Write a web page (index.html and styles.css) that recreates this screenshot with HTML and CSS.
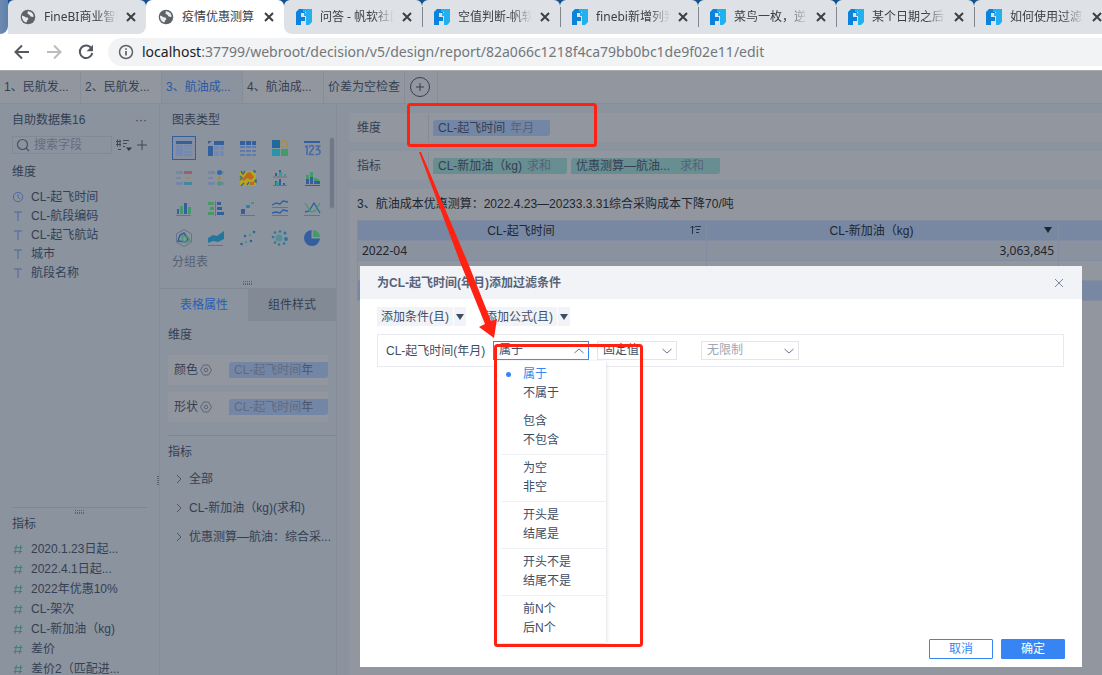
FILE: index.html
```html
<!DOCTYPE html>
<html lang="zh-CN">
<head>
<meta charset="utf-8">
<title>疫情优惠测算</title>
<link rel="stylesheet" href="styles.css">
</head>
<body>
<svg class="defs" aria-hidden="true">
  <symbol id="globe" viewBox="0 0 16 16"><circle cx="8" cy="8" r="7.3" fill="#5f6368"/><path d="M2 6.5C4 7 5 8.200 7 8.500c1.500.3 1.600 1.500.8 2.300-.8.7-.6 2-1.600 2.700C3.500 12.800 1.700 10 2 6.500zM7 2.200c1 .1 1.300.8.6 1.500C6.800 4.500 8 5.200 9 5.600c1 .5.8 1.800 1.900 2 1.100.1 1.700.6 2.700.2C13.700 4.500 11 2 7 2.200z" fill="#e9ebee"/></symbol>
  <symbol id="fan" viewBox="0 0 16 16"><path d="M3 0h6v4H5v4h4v4H5v4H0V3z" fill="#0b83dc"/><path d="M7 0h9v13l-3 3h-3V7H8V4h2V3H7z" fill="#22b1ee"/></symbol>
  <symbol id="x" viewBox="0 0 10 10"><path d="M1 1l8 8M9 1L1 9" stroke="currentColor" fill="none"/></symbol>
  <symbol id="type-t" viewBox="0 0 12 12"><path d="M2 2h8M6 2v9" stroke="#4a68a0" fill="none"/></symbol>
  <symbol id="hash" viewBox="0 0 12 12"><path d="M4.500 2L3 11M9 2L7.500 11M2 4.500h8.500M1.500 8.500H10" stroke="#36837f" fill="none"/></symbol>
  <symbol id="gear" viewBox="0 0 12 12"><path d="M3.500 1h5L11.500 6l-3 5h-5L.5 6z" stroke="#5b6577" fill="none"/><circle cx="6" cy="6" r="1.800" stroke="#5b6577" fill="none"/></symbol>
  <symbol id="right" viewBox="0 0 10 12"><path d="M3 2l4 4-4 4" stroke="#4b566a" fill="none"/></symbol>
  <symbol id="down" viewBox="0 0 12 8"><path d="M1.500 2L6 6l4.500-4" stroke="#6c7588" fill="none"/></symbol>
  <symbol id="up" viewBox="0 0 12 8"><path d="M1.500 6L6 2l4.500 4" stroke="#6c7588" fill="none"/></symbol>
  <symbol id="tri" viewBox="0 0 8 6"><path d="M0 0h8L4 6z" fill="currentColor"/></symbol>
</svg>

<header class="browser">
  <nav class="tabstrip" aria-label="标签页">
    <span class="edge"></span>
    <div class="tab first"><svg><use href="#globe"/></svg><span class="name">FineBI商业智能</span><button aria-label="关闭"><svg><use href="#x"/></svg></button></div>
    <div class="tab current"><svg><use href="#globe"/></svg><span class="name">疫情优惠测算</span><button aria-label="关闭"><svg><use href="#x"/></svg></button></div>
    <div class="tab after"><svg><use href="#fan"/></svg><span class="name">问答 - 帆软社区</span><button aria-label="关闭"><svg><use href="#x"/></svg></button></div>
    <div class="tab split"><svg><use href="#fan"/></svg><span class="name">空值判断-帆软</span><button aria-label="关闭"><svg><use href="#x"/></svg></button></div>
    <div class="tab split"><svg><use href="#fan"/></svg><span class="name">finebi新增列判</span><button aria-label="关闭"><svg><use href="#x"/></svg></button></div>
    <div class="tab split"><svg><use href="#fan"/></svg><span class="name">菜鸟一枚，逆</span><button aria-label="关闭"><svg><use href="#x"/></svg></button></div>
    <div class="tab split"><svg><use href="#fan"/></svg><span class="name">某个日期之后</span><button aria-label="关闭"><svg><use href="#x"/></svg></button></div>
    <div class="tab split"><svg><use href="#fan"/></svg><span class="name">如何使用过滤</span><button aria-label="关闭"><svg><use href="#x"/></svg></button></div>
  </nav>
  <div class="toolbar">
    <button aria-label="后退"><svg viewBox="0 0 16 16"><path d="M15 8H2M8 1.500L1.500 8 8 14.500" stroke="#55595e" stroke-width="2" fill="none"/></svg></button>
    <button aria-label="前进"><svg viewBox="0 0 16 16"><path d="M1 8h13M8 1.500L14.500 8 8 14.500" stroke="#babcbe" stroke-width="2" fill="none"/></svg></button>
    <button aria-label="刷新"><svg viewBox="0 0 16 16"><path d="M13.500 4.500A6.300 6.300 0 1 0 14.300 9" stroke="#55595e" stroke-width="2" fill="none"/><path d="M15 .8v6.400H8.600z" fill="#55595e"/></svg></button>
    <div class="address">
      <svg viewBox="0 0 16 16"><circle cx="8" cy="8" r="6.500" stroke="#5f6368" stroke-width="1.500" fill="none"/><path d="M8 7v4.500M8 4.200v1.600" stroke="#5f6368" stroke-width="1.700"/></svg>
      <span class="url"><b>localhost</b>:37799/webroot/decision/v5/design/report/82a066c1218f4ca79bb0bc1de9f02e11/edit</span>
    </div>
  </div>
</header>

<div class="app">
  <nav class="sheets" aria-label="组件">
    <button>1、民航发...</button><button>2、民航发...</button><button class="on">3、航油成...</button><button>4、航油成...</button><button>价差为空检查</button>
    <button class="add" aria-label="添加组件"><svg viewBox="0 0 22 22"><circle cx="11" cy="11" r="9.500" stroke="#333e52" fill="none"/><path d="M7 11h8M11 7v8" stroke="#333e52"/></svg></button>
  </nav>
  <div class="workspace">
    <aside class="fields">
      <section class="dims">
        <div class="head"><span>自助数据集16</span><span class="dots">···</span></div>
        <div class="searchrow">
          <label class="search"><svg viewBox="0 0 14 14"><circle cx="6.500" cy="6.500" r="5" stroke="#465166" stroke-width="1.200" fill="none"/><path d="M10 10l3 3" stroke="#465166" stroke-width="1.300"/></svg><input type="text" placeholder="搜索字段" aria-label="搜索字段"></label>
          <button class="sort" aria-label="排序"><svg viewBox="0 0 16 14"><path d="M0 3.500h5M0 6.500h5M1.500 1.500v7M4 1.500v7M7 2.500h6M7 5.500h4M7 8.500h2M2 11.500h3" stroke="#3d485c" fill="none"/><path d="M10 9.500h6l-3 3.500z" fill="#2f394d"/></svg></button>
          <button class="plus" aria-label="添加"><svg viewBox="0 0 12 12"><path d="M1 6h10M6 1v10" stroke="#3d485c"/></svg></button>
        </div>
        <h2>维度</h2>
        <ul>
          <li><svg viewBox="0 0 12 12"><circle cx="6" cy="6" r="4.700" stroke="#4a68a0" fill="none"/><path d="M6 3v3l2 2" stroke="#4a68a0" fill="none"/></svg>CL-起飞时间</li>
          <li><svg><use href="#type-t"/></svg>CL-航段编码</li>
          <li><svg><use href="#type-t"/></svg>CL-起飞航站</li>
          <li><svg><use href="#type-t"/></svg>城市</li>
          <li><svg><use href="#type-t"/></svg>航段名称</li>
        </ul>
      </section>
      <section class="measures">
        <span class="grip"></span>
        <h2>指标</h2>
        <ul>
          <li><svg><use href="#hash"/></svg>2020.1.23日起...</li>
          <li><svg><use href="#hash"/></svg>2022.4.1日起...</li>
          <li><svg><use href="#hash"/></svg>2022年优惠10%</li>
          <li><svg><use href="#hash"/></svg>CL-架次</li>
          <li><svg><use href="#hash"/></svg>CL-新加油（kg)</li>
          <li><svg><use href="#hash"/></svg>差价</li>
          <li><svg><use href="#hash"/></svg>差价2（匹配进...</li>
        </ul>
      </section>
      <span class="side-grip"></span>
    </aside>

    <aside class="config">
      <section class="charts">
        <h2>图表类型</h2>
        <div class="chartbox">
          <div class="grid">
            <button class="picked" aria-label="分组表"><svg viewBox="0 0 20 20"><path d="M2 3h16v3H2z" fill="#335f9f"/><path d="M2 7h7v11H2z" fill="#7389af"/><path d="M10 7h8v2h-8zM10 10h8v1h-8zM10 13h8v2h-8zM10 16h8v2h-8z" fill="#7389af"/></svg></button>
            <button aria-label="交叉表"><svg viewBox="0 0 20 20"><path d="M8 3h10v4H8zM2 8h5v10H2zM2 3h4L2 6z" fill="#335f9f"/><path d="M8 8h5v4H8zM14 8h4v4h-4zM8 13h5v5H8zM14 13h4v5h-4z" fill="#7389af"/></svg></button>
            <button aria-label="明细表"><svg viewBox="0 0 20 20"><path d="M2 3h5v4H2zM8 3h5v4H8zM14 3h4v4h-4z" fill="#335f9f"/><path d="M2 8h5v2H2zM8 8h5v2H8zM14 8h4v2h-4zM2 12h5v2H2zM8 12h5v2H8zM14 12h4v2h-4zM2 16h5v2H2zM8 16h5v2H8zM14 16h4v2h-4z" fill="#5e7bab"/></svg></button>
            <button aria-label="颜色表格"><svg viewBox="0 0 20 20"><path d="M2 2h8v8H2z" fill="#1e69a0"/><path d="M11 3h6v6h-6z" fill="none" stroke="#a98f45" stroke-width="2" stroke-dasharray="2 1"/><path d="M2 11h8v7H2z" fill="#2596a8"/><path d="M11 11h7v7h-7z" fill="#469a68"/></svg></button>
            <button aria-label="指标卡"><svg viewBox="0 0 20 20"><path d="M2 3h16v2H2z" fill="#335f9f"/><path d="M3 9l2-1v9M7.500 9.500q0-2 2-2t2 2c0 2-4 4-4 7h4.500M13.500 8h4l-2.500 3.500q3 0 3 2.500 0 3-4.500 2.500" stroke="#466ca8" stroke-width="1.600" fill="none"/></svg></button>
            <button aria-label="KPI"><svg viewBox="0 0 20 20"><path d="M2 3h7v3H2zM2 9h5v2H2zM2 14h7v3H2z" fill="#7587a4"/><path d="M10 3h8v3h-8z" fill="#a05d72"/><path d="M11 9h5v2h-5z" fill="#a08b58"/><path d="M10 14h8v3h-8z" fill="#46869e"/></svg></button>
            <button aria-label="KPI 图标"><svg viewBox="0 0 20 20"><path d="M2 3h7v3H2zM2 9h5v2H2zM2 14h7v3H2zM15 3h3v3h-3zM15 14h3v3h-3z" fill="#7587a4"/><circle cx="13.500" cy="4.500" r="2.500" fill="#3568aa"/><circle cx="13.500" cy="10" r="1.700" fill="#a08b48"/><circle cx="13.500" cy="15.500" r="2.300" fill="#4c987a"/></svg></button>
            <button aria-label="热力区域图"><svg viewBox="0 0 20 20"><path d="M2 3h16v15H2z" fill="#b9a422"/><path d="M9 5l3-1 4 5-3 3-4-2-3 3-2-2 3-3zM12 14h4v3h-4z" fill="#b76b22"/><path d="M3 3l2 3 2-3M16 13l2 1v-3M6 15l-3 3M15 3h2v2M2 8l2 2-2 2M9 17l2-3" stroke="#356b8f" stroke-width="1.500" fill="none"/></svg></button>
            <button aria-label="分区柱形图"><svg viewBox="0 0 20 20"><path d="M3 9h14M3 17.500h14" stroke="#6a7385"/><path d="M5 5h2v3H5zM9 2h2v6H9zM5 13h2v4H5zM9 11h2v6H9zM13 15h2v2h-2z" fill="#335f9f"/><path d="M9 4h3v4H9zM14 6h2v2h-2zM6 14h3v3H6z" fill="#3b9b92"/></svg></button>
            <button aria-label="堆积柱形图"><svg viewBox="0 0 20 20"><path d="M4 11h3v5H4zM8 9h3v7H8zM12 13h3v3h-3zM15 13h3v3h-3z" fill="#335f9f"/><path d="M4 7h3v4H4zM8 4h3v5H8zM12 10h3v3h-3zM15 11h2v2h-2z" fill="#469a68"/><path d="M3 17.500h15" stroke="#4e596d"/></svg></button>
            <button aria-label="多系列柱形图"><svg viewBox="0 0 20 20"><path d="M3 11h2v5H3zM10 5h3v11h-3z" fill="#335f9f"/><path d="M6 8h3v8H6zM14 9h3v7h-3z" fill="#469a68"/><path d="M2 17.500h15" stroke="#6a7385"/></svg></button>
            <button aria-label="对比柱形图"><svg viewBox="0 0 20 20"><path d="M2 4h6v3H2zM4 9h4v3H4zM2 14h6v3H2z" fill="#469a68"/><path d="M11 4h4v3h-4zM11 9h5v3h-5zM11 14h7v3h-7z" fill="#335f9f"/><path d="M9.500 3v15" stroke="#6a7385"/></svg></button>
            <button aria-label="瀑布图"><svg viewBox="0 0 20 20"><path d="M3 11h4v5H3z" fill="#335f9f"/><path d="M8 7h4v3H8z" fill="#2b87a8"/><path d="M13 4h3v2h-3z" fill="#469a68"/><path d="M2 17.500h15" stroke="#6a7385"/></svg></button>
            <button aria-label="分区折线图"><svg viewBox="0 0 20 20"><path d="M2 7l4-2 4 1 3-3 5 1M2 15l4-1 4 1 3-3 5 1" stroke="#335f9f" stroke-width="1.300" fill="none"/><path d="M2 9.500h16M2 17.500h16" stroke="#6a7385"/></svg></button>
            <button aria-label="折线图"><svg viewBox="0 0 20 20"><path d="M3 14l4-1 5-8 6 10" stroke="#335f9f" stroke-width="1.300" fill="none"/><path d="M3 5l6 9 4-1 5-8" stroke="#469a68" stroke-width="1.300" fill="none"/><path d="M2 17.500h16" stroke="#6a7385"/></svg></button>
            <button aria-label="雷达图"><svg viewBox="0 0 20 20"><path d="M10 1.500l7.500 4.300v8.500L10 18.500l-7.500-4.200V5.800z" stroke="#6a7385" fill="none"/><path d="M10 5l4 6-2 3-8-1 2-6z" stroke="#335f9f" stroke-width="1.500" fill="none"/><path d="M8 8l6 1 2 4-7 1z" stroke="#469a68" stroke-width="1.300" fill="none"/></svg></button>
            <button aria-label="面积图"><svg viewBox="0 0 20 20"><path d="M2 10l5-3 4 1 7-5v8l-6 3-5-1-5 2z" fill="#23779f"/><path d="M2 17.500h15" stroke="#6a7385"/></svg></button>
            <button aria-label="散点图"><svg viewBox="0 0 20 20"><g fill="#335f9f"><circle cx="3.500" cy="16" r="1.300"/><circle cx="7" cy="8" r="1.200"/><circle cx="13" cy="13" r="1.300"/><circle cx="16" cy="4" r="1.300"/></g><g fill="#469a8b"><circle cx="8" cy="14" r="1.300"/><circle cx="12" cy="7" r="1.300"/></g></svg></button>
            <button aria-label="聚合气泡图"><svg viewBox="0 0 20 20"><circle cx="9" cy="10" r="3.500" fill="#558f93"/><g fill="#2d769c"><circle cx="5" cy="4.500" r="1.300"/><circle cx="10" cy="3.500" r="1.300"/><circle cx="15" cy="5" r="1.500"/><circle cx="16" cy="11" r="2"/><circle cx="14" cy="15.500" r="1.300"/><circle cx="9" cy="16.500" r="1.200"/><circle cx="5" cy="14.500" r="1.300"/><circle cx="3" cy="9" r="1.300"/></g></svg></button>
            <button aria-label="饼图"><svg viewBox="0 0 20 20"><path d="M9.500 2v8.500H18A8 8 0 1 1 9.500 2z" fill="#335f9f"/><path d="M11 2a7 7 0 0 1 7 7h-7z" fill="#469a68"/></svg></button>
          </div>
          <span class="scroll"></span>
        </div>
        <p>分组表</p>
        <span class="grip"></span>
      </section>
      <div class="proptabs"><button class="on">表格属性</button><button>组件样式</button></div>
      <section class="attrs">
        <h2>维度</h2>
        <div class="attr"><span>颜色</span><svg><use href="#gear"/></svg><span class="pill"><i>CL-起飞时间</i>年</span></div>
        <div class="attr"><span>形状</span><svg><use href="#gear"/></svg><span class="pill"><i>CL-起飞时间</i>年</span></div>
      </section>
      <section class="tree">
        <h2>指标</h2>
        <ul>
          <li><svg><use href="#right"/></svg><span>全部</span></li>
          <li><svg><use href="#right"/></svg><span>CL-新加油（kg)(求和)</span></li>
          <li><svg><use href="#right"/></svg><span>优惠测算—航油：综合采...</span></li>
        </ul>
      </section>
    </aside>

    <main class="canvas">
      <div class="shelf"><span class="label">维度</span><div class="chips"><span class="chip blue">CL-起飞时间<i>年月</i></span></div></div>
      <div class="shelf"><span class="label">指标</span><div class="chips"><span class="chip green">CL-新加油（kg)<i>求和</i></span><span class="chip green long">优惠测算—航油...<i>求和</i></span></div></div>
      <div class="result">
        <h1>3、航油成本优惠测算：2022.4.23—20233.3.31综合采购成本下降70/吨</h1>
        <table>
          <colgroup><col class="c1"><col class="c2"><col></colgroup>
          <thead><tr>
            <th><div>CL-起飞时间<svg class="sorted" viewBox="0 0 12 10"><path d="M2.500 9V1M.5 3l2-2 2 2M5 1.500h6M6 4.500h4M6 7.500h3" stroke="#2c3547" fill="none"/></svg></div></th>
            <th><div>CL-新加油（kg)<svg class="caret"><use href="#tri"/></svg></div></th>
            <th></th>
          </tr></thead>
          <tbody>
            <tr class="band"><td>2022-04</td><td class="num">3,063,845</td><td></td></tr>
            <tr><td></td><td></td><td></td></tr>
            <tr class="total"><td></td><td></td><td></td></tr>
          </tbody>
        </table>
      </div>
    </main>
  </div>

  <div class="dialog" role="dialog" aria-labelledby="dlg-title">
    <div class="dlg-head"><h2 id="dlg-title">为CL-起飞时间(年月)添加过滤条件</h2><button aria-label="关闭"><svg><use href="#x"/></svg></button></div>
    <div class="dlg-body">
      <div class="adders">
        <div class="split-btn"><button>添加条件(且)</button><button class="more" aria-label="更多条件"><svg><use href="#tri"/></svg></button></div>
        <div class="split-btn"><button>添加公式(且)</button><button class="more" aria-label="更多公式"><svg><use href="#tri"/></svg></button></div>
      </div>
      <div class="condition">
        <label for="op">CL-起飞时间(年月)</label>
        <div class="pick open">
          <select id="op"><option>属于</option></select><svg><use href="#up"/></svg>
          <div class="menu" role="listbox" aria-label="条件">
            <div class="group bare"><button class="sel">属于</button><button>不属于</button></div>
            <div class="group"><button>包含</button><button>不包含</button></div>
            <div class="group"><button>为空</button><button>非空</button></div>
            <div class="group"><button>开头是</button><button>结尾是</button></div>
            <div class="group"><button>开头不是</button><button>结尾不是</button></div>
            <div class="group bare"><button>前N个</button><button>后N个</button></div>
          </div>
        </div>
        <div class="pick kind"><select aria-label="值类型"><option>固定值</option></select><svg><use href="#down"/></svg></div>
        <div class="pick limit"><select aria-label="限制"><option>无限制</option></select><svg><use href="#down"/></svg></div>
      </div>
    </div>
    <div class="dlg-foot"><button>取消</button><button class="ok">确定</button></div>
  </div>
</div>

<svg class="marks" width="1102" height="675" viewBox="0 0 1102 675" aria-hidden="true">
  <rect x="408.500" y="104.500" width="187" height="41" rx="2" fill="none" stroke="#ff2112" stroke-width="3"/>
  <rect x="495.500" y="345.500" width="146" height="300" rx="2" fill="none" stroke="#ff2112" stroke-width="3"/>
  <path d="M419 152h2l47 111 23 58 6-2-3 19-15-11 6-3-25-62z" fill="#ff2112"/>
</svg>
</body>
</html>
```

FILE: styles.css
```css
* { box-sizing: border-box; }
html, body { height: 100%; }
body {
  margin: 0;
  position: relative;
  display: flex;
  flex-direction: column;
  overflow: hidden;
  font-family: "Liberation Sans", "Noto Sans CJK SC", sans-serif;
  font-size: 12px;
  line-height: 18px;
  color: #343f54;
  background: #8b939e;
}
button, input, select { font: inherit; color: inherit; background: none; border: 0; padding: 0; margin: 0; border-radius: 0; }
h1, h2, p, ul { margin: 0; padding: 0; font-size: 12px; font-weight: 400; list-style: none; }
i { font-style: normal; }
svg { display: block; flex: none; }
.defs { position: absolute; width: 0; height: 0; }

/* browser frame */
.browser { flex: none; background: #fff; font-family: "Noto Sans", "Noto Sans CJK SC", sans-serif; }
.tabstrip { display: flex; height: 34px; overflow: hidden; background: linear-gradient(#14508c 0 10px, #fff 10px); }
.edge { flex: none; width: 8px; background: linear-gradient(90deg, #6c8ab2, #5f80ac); border-bottom-right-radius: 8px; }
.tab {
  position: relative;
  flex: 0 0 138px;
  min-width: 0;
  display: flex;
  align-items: center;
  padding: 0 10px 0 12px;
  background: #dee1e6;
  border-radius: 6px 6px 0 0;
  color: #3c4043;
}
.tab > svg { width: 16px; height: 16px; }
.tab.first { border-bottom-right-radius: 8px; }
.tab.current { background: #fff; }
.tab.after { border-bottom-left-radius: 8px; }
.tab.split::before { content: ""; position: absolute; left: 0; top: 7px; width: 1px; height: 20px; background: #80868b; }
.tab .name { flex: 1; min-width: 0; margin: 0 8px; overflow: hidden; white-space: nowrap; -webkit-mask-image: linear-gradient(90deg, #000 72%, transparent); mask-image: linear-gradient(90deg, #000 72%, transparent); }
.tab.current .name { -webkit-mask-image: none; mask-image: none; }
.tab button svg { width: 10px; height: 10px; color: #3c4043; stroke-width: 2; }
.toolbar { display: flex; align-items: center; height: 36px; padding-left: 14px; gap: 16px; }
.toolbar button svg { width: 16px; height: 16px; }
.address { flex: 1; display: flex; align-items: center; gap: 8px; height: 28px; padding-left: 10px; margin-left: -2px; border-radius: 14px 0 0 14px; background: #f1f3f4; }
.address svg { width: 16px; height: 16px; }
.url { font-size: 14px; color: #72777c; white-space: nowrap; }
.url b { font-weight: 400; color: #202124; }

/* application */
.app { position: relative; flex: 1; min-height: 0; display: flex; flex-direction: column; }
.sheets { flex: none; display: flex; height: 34px; background: #92979f; border-top: 1px solid #a5a8ad; border-bottom: 1px solid #858d99; }
.sheets button { flex: 0 0 81px; padding: 0 4px; text-align: left; white-space: nowrap; border-right: 1px solid #858d99; }
.sheets .on { background: #8b939e; color: #2c58a5; }
.sheets .add { flex-basis: 33px; }
.add svg { width: 22px; height: 22px; }
.workspace { flex: 1; min-height: 0; display: flex; }

.fields { position: relative; flex: 0 0 160px; overflow: hidden; border-right: 1px solid #858c98; }
.dims { height: 403px; padding: 7px 12px 0; }
.head { display: flex; justify-content: space-between; }
.searchrow { display: flex; align-items: center; gap: 4px; margin: 7px 0 9px; }
.search { flex: 0 0 100px; display: flex; align-items: center; gap: 4px; height: 18px; padding-left: 3px; border: 1px solid #828995; }
.search svg { width: 14px; height: 14px; }
.search input { width: 70px; height: 16px; outline: 0; }
.search input::placeholder { color: #636d7f; opacity: 1; }
.sort svg { width: 16px; height: 14px; }
.plus svg { width: 12px; height: 12px; }
.dims ul { margin-top: 6px; }
.fields li { display: flex; align-items: center; gap: 7px; height: 19px; white-space: nowrap; }
.fields li svg { width: 12px; height: 12px; }
.measures { position: relative; margin: 0 12px; padding-top: 7px; border-top: 1px solid #7f8794; }
.measures ul { margin-top: 6px; }
.measures li { height: 20px; }
.grip { position: absolute; width: 10px; height: 4px; background: linear-gradient(#8b939e, #8b939e) 0 1px / 100% 1px no-repeat, repeating-linear-gradient(90deg, #596375 0 1px, transparent 1px 2px); }
.measures .grip { left: 63px; top: 2px; }
.side-grip { position: absolute; right: -1px; top: 372px; width: 3px; height: 10px; background: repeating-linear-gradient(#596375 0 1px, transparent 1px 2px); }

.config { flex: 0 0 177px; border-right: 1px solid #858c98; }
.charts { position: relative; height: 185px; padding: 7px 0 0 12px; border-bottom: 1px solid #828a97; }
.chartbox { display: flex; margin-top: 7px; gap: 2px; }
.grid { display: grid; grid-template-columns: repeat(5, 24px); grid-auto-rows: 24px; column-gap: 8px; row-gap: 6px; }
.grid button { display: grid; place-items: center; }
.grid svg { width: 20px; height: 20px; }
.grid .picked { border: 1px solid #335f9f; background: #858fa0; }
.scroll { width: 4px; height: 70px; margin: 2px 0 0 4px; border-radius: 2px; background: #717887; box-shadow: 0 0 0 1px #878e99; }
.charts p { color: #566073; margin-top: 3px; }
.charts .grip { left: 83px; bottom: 3px; }
.proptabs { display: flex; height: 32px; }
.proptabs button { flex: 1; background: #828a95; }
.proptabs .on { background: none; color: #2a5eb4; }
.attrs { margin-left: 8px; padding: 5px 8px 13px 0; border-bottom: 1px solid #7f8794; }
.attr { display: flex; align-items: center; height: 30px; margin-bottom: 7px; padding-left: 6px; background: #92979f; }
.attr svg { width: 12px; height: 12px; margin-left: 2px; }
.attrs h2 { margin-bottom: 11px; }
.attrs .attr:last-child { margin-bottom: 0; }
.pill { flex: 0 0 99px; height: 16px; line-height: 16px; margin-left: auto; padding-left: 5px; border-radius: 3px 0 3px 0; background: #7486a6; color: #4a566d; }
.pill i { color: #5f6b80; }
.tree { padding: 7px 0 0 8px; }
.tree ul { margin-top: 3px; }
.tree li { display: flex; align-items: center; gap: 5px; height: 29px; padding-left: 6px; }
.tree svg { width: 10px; height: 12px; }
.tree span { white-space: nowrap; }

.canvas { flex: 1; min-width: 0; display: flex; flex-direction: column; gap: 9px; padding: 9px 0 0 12px; }
.shelf { flex: none; display: flex; align-items: center; height: 29px; background: #92979f; }
.label { flex: 0 0 80px; padding: 5px 8px; border-right: 1px solid #858c98; }
.chips { display: flex; gap: 4px; padding-left: 4px; }
.chip { height: 16px; line-height: 16px; padding: 0 16px 0 5px; border-radius: 3px 0 3px 0; white-space: nowrap; }
.chip i { margin-left: 5px; color: #566278; }
.blue { background: #7486a6; }
.green { background: #678e90; }
.long i { margin-left: 10px; }
.result { flex: 1; min-height: 0; padding: 6px 0 0 8px; background: #92979f; color: #20262f; }
.result h1 { margin-bottom: 7px; white-space: nowrap; }
table { width: 100%; table-layout: fixed; border-collapse: collapse; }
.c1 { width: 349px; }
.c2 { width: 352px; }
th, td { height: 20px; padding: 0 4px; font-weight: 400; line-height: 18px; border: 1px solid #828da1; }
th { background: #7888a2; }
th:last-child, td:last-child { border-right: 0; }
th div { position: relative; padding-right: 22px; }
.sorted { position: absolute; right: 0; top: 3px; width: 12px; height: 10px; }
.caret { position: absolute; right: 2px; top: 5px; width: 8px; height: 6px; }
td { font-family: "Noto Sans", "Noto Sans CJK SC", sans-serif; }
.band td { background: #8b929f; }
.total td { background: #7888a2; }
.num { text-align: right; }

/* filter dialog */
.dialog { position: absolute; left: 360px; right: 20px; top: 196px; bottom: 8px; display: flex; flex-direction: column; background: #fff; color: #3d4d66; }
.dlg-head { display: flex; align-items: center; justify-content: space-between; height: 33px; padding: 0 18px 0 17px; background: #f2f3f7; }
.dlg-head h2 { font-weight: 700; color: #566278; }
.dlg-head svg { width: 10px; height: 10px; color: #7c859a; }
.dlg-body { flex: 1; padding: 8px 18px 0 17px; }
.adders { display: flex; gap: 15px; }
.split-btn { display: flex; gap: 1px; }
.split-btn button { height: 19px; padding: 0 4px; line-height: 20px; background: #f2f3f7; }
.split-btn .more { padding: 0 2px; }
.split-btn svg { width: 8px; height: 6px; }
.condition { display: flex; align-items: center; height: 33px; margin-top: 8px; padding-left: 8px; border: 1px solid #e8eaef; }
.condition label { flex: 0 0 107px; white-space: nowrap; }
.pick { position: relative; flex: none; height: 19px; border: 1px solid #e3e5ea; }
.pick > svg { position: absolute; right: 3px; top: 5px; width: 12px; height: 8px; pointer-events: none; }
.pick select { display: block; width: 100%; height: 17px; line-height: 17px; padding-left: 5px; appearance: none; outline: 0; }
.open { width: 96px; border-color: #3685f2; }
.kind { width: 80px; margin-left: 8px; }
.limit { width: 98px; margin-left: 24px; color: #9ea6b5; }
.menu { position: absolute; left: 3px; top: 19px; width: 109px; padding-left: 4px; background: #fff; box-shadow: 0 1px 4px #cdd2dc; }
.group { padding: 4px 0; border-bottom: 1px solid #eef0f4; }
.group.bare { border-color: transparent; }
.group button { position: relative; display: block; width: 100%; height: 19px; line-height: 19px; padding-left: 22px; text-align: left; }
.group .sel { color: #3685f2; }
.sel::before { content: ""; position: absolute; left: 5px; top: 7px; width: 5px; height: 5px; border-radius: 50%; background: #3685f2; }
.dlg-foot { display: flex; justify-content: flex-end; gap: 8px; padding: 0 17px 8px; }
.dlg-foot button { width: 64px; height: 20px; line-height: 18px; border: 1px solid #3685f2; border-radius: 1px; color: #3685f2; }
.dlg-foot .ok { background: #3685f2; color: #fff; }

.marks { position: absolute; left: 0; top: 0; pointer-events: none; }
```
